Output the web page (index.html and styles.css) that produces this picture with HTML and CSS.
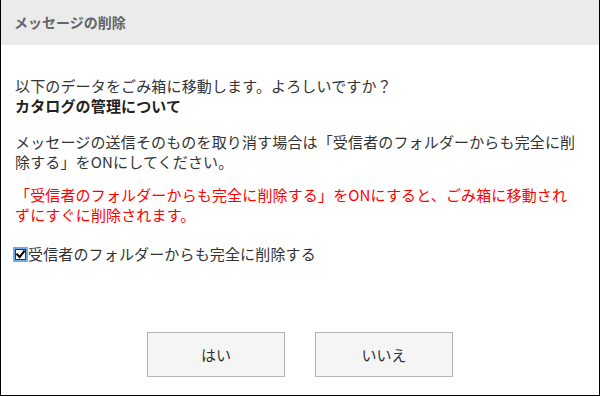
FILE: index.html
```html
<!DOCTYPE html>
<html lang="ja">
<head>
<meta charset="utf-8">
<title>メッセージの削除</title>
<link rel="stylesheet" href="styles.css">
</head>
<body>
<div class="dialog">
  <div class="dialog-header">メッセージの削除</div>
  <div class="dialog-body">
    <p class="para first">以下のデータをごみ箱に移動します。よろしいですか？<br><strong>カタログの管理について</strong></p>
    <p class="para">メッセージの送信そのものを取り消す場合は「受信者のフォルダーからも完全に削除する」をONにしてください。</p>
    <p class="para warn">「受信者のフォルダーからも完全に削除する」をONにすると、ごみ箱に移動されずにすぐに削除されます。</p>
    <label class="check">
      <svg class="check-box" width="15" height="15" viewBox="0 0 15 15" aria-hidden="true">
        <rect x="0" y="0" width="15" height="15" fill="#6fadea"/>
        <rect x="2" y="2" width="11" height="11" fill="#ffffff"/>
        <rect x="2.5" y="2.5" width="10" height="10" fill="none" stroke="#333333" stroke-width="1"/>
        <path d="M4.2 7.4 L6.6 10.2 L11 4.4" fill="none" stroke="#000000" stroke-width="2.1" stroke-linecap="square"/>
      </svg>
      <span>受信者のフォルダーからも完全に削除する</span>
    </label>
  </div>
  <div class="dialog-footer">
    <button class="btn" type="button">はい</button>
    <button class="btn" type="button">いいえ</button>
  </div>
</div>
</body>
</html>
```
FILE: styles.css
```css
html, body {
  margin: 0;
  padding: 0;
  background: #ffffff;
}

body {
  font-family: "Noto Sans CJK JP", "Noto Sans", sans-serif;
  color: #333333;
}

.dialog {
  box-sizing: border-box;
  width: 600px;
  height: 396px;
  border: 1px solid #000000;
  border-top: 0;
  display: flex;
  flex-direction: column;
}

.dialog-header {
  height: 45px;
  line-height: 45px;
  background: #ebebeb;
  padding-left: 13px;
  font-size: 14px;
  font-weight: bold;
  color: #666666;
}

.dialog-body {
  flex: 1;
  padding: 31px 20px 0 14px;
  font-size: 15px;
  line-height: 20px;
  letter-spacing: 0.15px;
}

.para {
  margin: 16px 0 0 0;
}

.para.first {
  margin-top: 0;
}

.para strong {
  font-weight: bold;
  color: #222222;
}

.para.warn {
  margin-top: 13px;
  color: #ff0000;
}

.check {
  margin-top: 19px;
  display: flex;
  align-items: center;
  height: 20px;
}

.check-box {
  display: block;
  margin-left: -2px;
  flex: none;
}

.dialog-footer {
  display: flex;
  justify-content: center;
  gap: 30px;
  padding-bottom: 18px;
}

.btn {
  box-sizing: border-box;
  width: 138px;
  height: 45px;
  background: #f5f5f5;
  border: 1px solid #b5b5b5;
  border-radius: 0;
  font-family: "Noto Sans CJK JP", "Noto Sans", sans-serif;
  font-size: 15px;
  color: #333333;
  padding: 0;
}
```
